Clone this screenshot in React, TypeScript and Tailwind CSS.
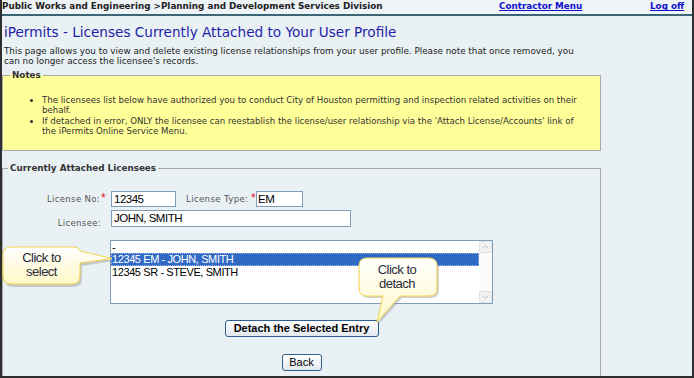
import React from "react";

const verdana = { fontFamily: '"DejaVu Sans", Verdana, sans-serif' };
const arial = { fontFamily: '"Liberation Sans", Arial, sans-serif' };

function Star() {
  return <span className="text-[#e02020] text-[12px] leading-none relative top-[-2px]" style={arial}>*</span>;
}

export default function App() {
  return (
    <div className="relative w-[694px] h-[378px] overflow-hidden bg-[#e9f1f4] border-l-2 border-r-2 border-b-2 border-[#2e2e2e]" style={verdana}>
      {/* Header */}
      <div className="h-[16px] flex items-center border-b-2 border-[#3b6676] bg-[#edf3f6] text-[8.8px] font-bold text-[#222]">
        <div className="w-[497px]">Public Works and Engineering &gt;Planning and Development Services Division</div>
        <a className="text-[#1010cc] underline w-[151px]">Contractor Menu</a>
        <a className="text-[#1010cc] underline">Log off</a>
      </div>

      {/* Title */}
      <div className="pl-[2px] mt-[8px] h-[17px] text-[13.6px] leading-[17px] text-[#1e1ea8]">
        iPermits - Licenses Currently Attached to Your User Profile
      </div>
      <p className="pl-[2px] mt-[5px] text-[8.8px] leading-[10px] text-[#222] w-[578px]">
        This page allows you to view and delete existing license relationships from your user profile. Please note that once removed, you can no longer access the licensee's records.
      </p>

      {/* Notes */}
      <fieldset className="mt-[4px] w-[599px] border border-[#a8a8a8] bg-[#ffff99] pt-[15px] pb-[14px] px-[2px]">
        <legend className="ml-[5px] px-[2px] text-[8.8px] font-bold text-[#333] leading-[10px]">Notes</legend>
        <ul className="list-disc ml-[37px] mr-[12px] text-[8.6px] leading-[10.3px] text-[#333]">
          <li>The licensees list below have authorized you to conduct City of Houston permitting and inspection related activities on their behalf.</li>
          <li>If detached in error, ONLY the licensee can reestablish the license/user relationship via the 'Attach License/Accounts' link of the iPermits Online Service Menu.</li>
        </ul>
      </fieldset>

      {/* Attached licensees */}
      <fieldset className="mt-[12px] w-[599px] h-[230px] border border-[#a8a8a8] border-b-0 pt-[18px]">
        <legend className="ml-[5px] px-[2px] text-[8.8px] font-bold text-[#333] leading-[10px]">Currently Attached Licensees</legend>

        <div className="flex items-center h-[16px]">
          <div className="w-[97px] text-right text-[8.6px] tracking-[0.3px] text-[#555]">License No:</div>
          <div className="w-[11px] pl-[1px]"><Star /></div>
          <div className="w-[65px] h-[16px] border border-[#7f9db9] bg-white text-[11.5px] tracking-[-0.5px] leading-[14px] pl-[2px] text-black" style={arial}>12345</div>
          <div className="ml-[10px] w-[65px] text-[8.6px] tracking-[0.35px] text-[#555] whitespace-nowrap">License Type:</div>
          <div className="w-[5px]"><Star /></div>
          <div className="w-[47px] h-[16px] border border-[#7f9db9] bg-white text-[11.5px] tracking-[-0.5px] leading-[14px] pl-[1px] text-black" style={arial}>EM</div>
        </div>

        <div className="flex items-center h-[17px] mt-[3px]">
          <div className="w-[98px] text-right text-[8.6px] tracking-[0.3px] text-[#555] pt-[9px]">Licensee:</div>
          <div className="w-[10px]" />
          <div className="w-[240px] h-[17px] border border-[#7f9db9] bg-white text-[11.5px] tracking-[-0.5px] leading-[15px] pl-[2px] text-black" style={arial}>JOHN, SMITH</div>
        </div>

        <div className="ml-[107px] mt-[13px] w-[383px] h-[64px] border border-[#7f9db9] bg-white flex" style={arial}>
          <div className="flex-1 text-[11px] tracking-[-0.4px] text-black">
            <div className="h-[12px] leading-[12px] pl-[1px]">-</div>
            <div className="h-[13px] bg-[#316ac5] text-white border border-dotted border-[#9bb8e8] leading-[11px]">12345 EM - JOHN, SMITH</div>
            <div className="h-[13px] leading-[13px] pl-[1px]">12345 SR - STEVE, SMITH</div>
          </div>
          <div className="w-[13px] flex flex-col bg-[#fbfbfb]">
            <div className="h-[12px] flex items-center justify-center bg-[#f3f3f3] border border-[#e2e2e2] rounded-[1px]">
              <svg width="7" height="4" viewBox="0 0 7 4"><path d="M0.5 3.5 L3.5 0.5 L6.5 3.5" fill="none" stroke="#c0c0c0" strokeWidth="1" /></svg>
            </div>
            <div className="flex-1" />
            <div className="h-[12px] flex items-center justify-center bg-[#f3f3f3] border border-[#e2e2e2] rounded-[1px]">
              <svg width="7" height="4" viewBox="0 0 7 4"><path d="M0.5 0.5 L3.5 3.5 L6.5 0.5" fill="none" stroke="#c0c0c0" strokeWidth="1" /></svg>
            </div>
          </div>
        </div>

        <div className="flex justify-center mt-[16px]">
          <button className="w-[154px] h-[17px] border border-[#2d5e8e] rounded-[3px] bg-gradient-to-b from-white to-[#e3e8ee] text-[11px] font-bold text-black leading-[15px]" style={arial}>
            Detach the Selected Entry
          </button>
        </div>
        <div className="flex justify-center mt-[17px]">
          <button className="w-[40px] h-[17px] border border-[#2d5e8e] rounded-[3px] bg-gradient-to-b from-white to-[#e3e8ee] text-[11px] text-black leading-[15px]" style={arial}>
            Back
          </button>
        </div>
      </fieldset>

      {/* Callouts */}
      <svg className="absolute left-[-2px] top-0 pointer-events-none" width="694" height="378" viewBox="0 0 694 378">
        <defs>
          <linearGradient id="cg1" x1="0" y1="0" x2="0" y2="1">
            <stop offset="0" stopColor="#ffffff" />
            <stop offset="1" stopColor="#fff8c8" />
          </linearGradient>
        </defs>
        <path d="M 13 250 H 76 Q 81 250 82 254 L 113 261 L 82 266 V 279 Q 82 287 74 287 H 13 Q 5 287 5 279 V 258 Q 5 250 13 250 Z" fill="#9a9a9a" opacity="0.45" />
        <path d="M 11 247 H 74 Q 79 247 80 251 L 112 258.5 L 80 263 V 276 Q 80 284 72 284 H 11 Q 3 284 3 276 V 255 Q 3 247 11 247 Z" fill="url(#cg1)" stroke="#f2d44a" strokeWidth="1" />
        <path d="M 369 260 H 431 Q 439 260 439 268 V 290 Q 439 298 431 298 H 402 L 379 324 L 386 298 H 369 Q 361 298 361 290 V 268 Q 361 260 369 260 Z" fill="#9a9a9a" opacity="0.45" />
        <path d="M 367 258 H 429 Q 437 258 437 266 V 288 Q 437 296 429 296 H 400 L 377 322 L 383 296 H 367 Q 359 296 359 288 V 266 Q 359 258 367 258 Z" fill="url(#cg1)" stroke="#f2d44a" strokeWidth="1" />
      </svg>
      <div className="absolute left-[1px] top-[251px] w-[77px] text-center text-[13px] tracking-[-0.5px] leading-[14px] text-[#2b2b3b]" style={arial}>
        Click to<br />select
      </div>
      <div className="absolute left-[356px] top-[263px] w-[78px] text-center text-[13px] tracking-[-0.5px] leading-[14px] text-[#2b2b3b]" style={arial}>
        Click to<br />detach
      </div>
    </div>
  );
}
